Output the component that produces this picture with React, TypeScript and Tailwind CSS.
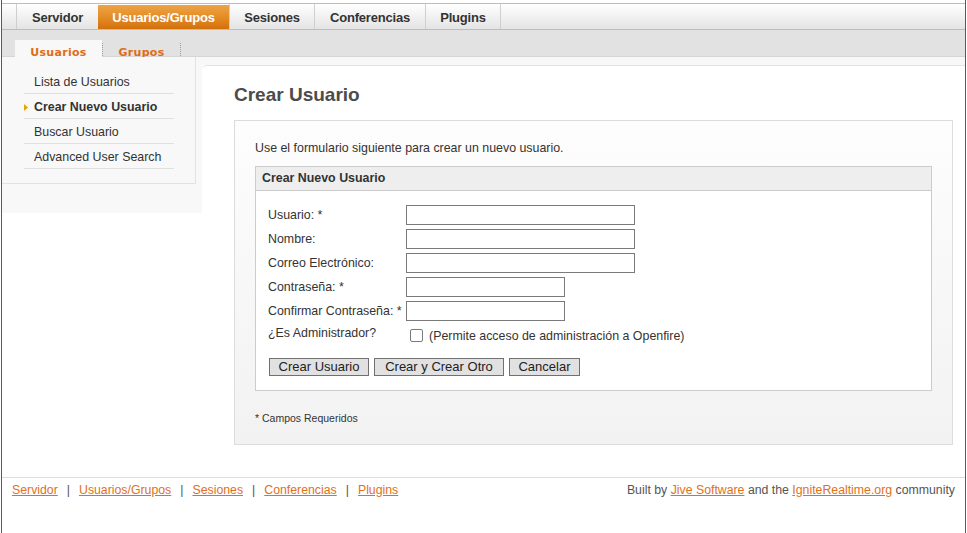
import type React from 'react';

const topTabs = [
  { label: 'Servidor', className: 'w-[82px]' },
  { label: 'Usuarios/Grupos', className: 'w-[131px]', active: true },
  { label: 'Sesiones', className: 'w-[85px]' },
  { label: 'Conferencias', className: 'w-[111px]' },
  { label: 'Plugins', className: 'w-[76px] border-r' },
];

const sideItems = [
  { label: 'Lista de Usuarios' },
  { label: 'Crear Nuevo Usuario', active: true },
  { label: 'Buscar Usuario' },
  { label: 'Advanced User Search' },
];

const fields = [
  { label: 'Usuario: *', width: 'w-[229px]' },
  { label: 'Nombre:', width: 'w-[229px]' },
  { label: 'Correo Electrónico:', width: 'w-[229px]' },
  { label: 'Contraseña: *', width: 'w-[159px]' },
  { label: 'Confirmar Contraseña: *', width: 'w-[159px]' },
];

const footerLinks = ['Servidor', 'Usuarios/Grupos', 'Sesiones', 'Conferencias', 'Plugins'];

const TopNav: React.FC = () => (
  <div className="mt-[3px] flex h-[27px] border-y border-[#bdbdbd] bg-gradient-to-b from-white to-[#e4e4e4] pl-[14px]">
    {topTabs.map((tab) =>
      tab.active ? (
        <div
          key={tab.label}
          className={`${tab.className} mt-[1px] flex items-center justify-center bg-gradient-to-b from-[#eda445] via-[#e48d25] to-[#d3700a] pt-[1px] text-[13px] font-bold tracking-[-0.2px] text-white`}
        >
          {tab.label}
        </div>
      ) : (
        <div
          key={tab.label}
          className={`${tab.className} flex items-center justify-center border-l border-[#cfcfcf] pt-[2px] text-[13px] font-bold tracking-[-0.2px] text-[#333]`}
        >
          {tab.label}
        </div>
      )
    )}
  </div>
);

const SubNav: React.FC = () => (
  <div className="flex h-[27px] items-end border-b border-[#d5d5d5] bg-[#e2e2e2] pl-[13px] font-['DejaVu_Sans',Verdana,sans-serif] text-[11px] leading-[13px] font-bold text-[#df6d17]">
    <div className="-mb-px flex h-[17px] w-[87px] items-center justify-center bg-[#f8f8f8] pt-[8px] tracking-[0.3px]">
      Usuarios
    </div>
    <div className="h-[13px] border-l border-dotted border-[#8da2a8]" />
    <div className="-mb-px flex h-[17px] w-[77px] items-center justify-center pt-[8px] tracking-[0.3px]">Grupos</div>
    <div className="h-[13px] border-l border-dotted border-[#8da2a8]" />
  </div>
);

const Sidebar: React.FC = () => (
  <aside className="w-[200px] shrink-0 self-start">
    <div className="h-[156px] bg-[#f8f8f8]">
      <div className="h-[127px] w-[194px] border-r border-b border-[#e2e2e2] pt-[12px] pl-[22px]">
        <ul className="w-[150px]">
          {sideItems.map((item) => (
            <li
              key={item.label}
              className={`flex h-[25px] items-center border-b border-[#e0e0e0] pt-[2px] text-[12.4px] text-[#333] ${item.active ? 'font-bold' : ''}`}
            >
              <span className="flex w-[10px] items-center">
                {item.active && (
                  <svg width="4" height="7" viewBox="0 0 4 7">
                    <path d="M0 0L4 3.5L0 7z" fill="#e9a10c" />
                  </svg>
                )}
              </span>
              {item.label}
            </li>
          ))}
        </ul>
      </div>
    </div>
  </aside>
);

const UserForm: React.FC = () => (
  <div className="mt-[10px] border border-[#cccccc] bg-white">
    <div className="flex h-[24px] items-center border-b border-[#cccccc] bg-[#eeeeee] pl-[6px] text-[12.4px] font-bold text-[#333]">
      Crear Nuevo Usuario
    </div>
    <div className="pt-[14px] pb-[14px] pl-[12px] text-[12.4px] text-[#333]">
      <div className="flex flex-col gap-[4px]">
        {fields.map((f) => (
          <div key={f.label} className="flex h-[20px] items-center">
            <label className="w-[138px] shrink-0">{f.label}</label>
            <input type="text" className={`${f.width} h-[20px] border border-[#7a7a7a] bg-white`} />
          </div>
        ))}
        <div className="flex h-[20px] items-center">
          <label className="w-[138px] shrink-0 -mt-[3px]">¿Es Administrador?</label>
          <span className="ml-[4px] h-[13px] w-[13px] rounded-[2px] border border-[#7a7a7a] bg-white" />
          <span className="ml-[6px] pt-[2px]">(Permite acceso de administración a Openfire)</span>
        </div>
      </div>
      <div className="mt-[13px] ml-[1px] flex gap-[5px] text-[13px] text-[#222]">
        <button className="flex h-[18px] w-[100px] items-center justify-center border border-[#707070] bg-[#e1e1e1]">
          Crear Usuario
        </button>
        <button className="flex h-[18px] w-[130px] items-center justify-center border border-[#707070] bg-[#e1e1e1]">
          Crear y Crear Otro
        </button>
        <button className="flex h-[18px] w-[71px] items-center justify-center border border-[#707070] bg-[#e1e1e1]">
          Cancelar
        </button>
      </div>
    </div>
  </div>
);

const Footer: React.FC = () => (
  <footer className="mt-[32px] flex justify-between border-t border-[#dddddd] pt-[5px] pr-[10px] pl-[10px] text-[12.3px] leading-[15px]">
    <div className="flex text-[#555]">
      {footerLinks.map((link, i) => (
        <span key={link} className="flex">
          {i > 0 && <span className="mx-[9px]">|</span>}
          <a href="#" className="text-[#e0701c] underline">
            {link}
          </a>
        </span>
      ))}
    </div>
    <div className="text-[#555]">
      Built by{' '}
      <a href="#" className="text-[#e0701c] underline">
        Jive Software
      </a>{' '}
      and the{' '}
      <a href="#" className="text-[#e0701c] underline">
        IgniteRealtime.org
      </a>{' '}
      community
    </div>
  </footer>
);

export default function App() {
  return (
    <div className="h-[533px] w-[967px] overflow-hidden bg-white font-['Liberation_Sans',Arial,sans-serif]">
      <div className="ml-[1px] flex h-full w-[965px] flex-col border-x border-[#595959]">
        <TopNav />
        <SubNav />
        <div className="flex">
          <Sidebar />
          <main className="flex-1">
            <div className="h-[8px] bg-[#f8f8f8]" />
            <div className="rounded-tl-[5px] border-t border-[#e3e3e3] pt-[18px] pr-[12px] pl-[32px]">
              <h1 className="text-[19px] leading-[22px] font-bold text-[#4c4c4c]">Crear Usuario</h1>
              <div className="mt-[14px] border border-[#dcdcdc] bg-gradient-to-b from-[#fdfdfd] to-[#f2f2f2] px-[20px] pt-[19px] pb-[19px]">
                <p className="text-[12.4px] leading-[16px] text-[#333]">
                  Use el formulario siguiente para crear un nuevo usuario.
                </p>
                <UserForm />
                <p className="mt-[20px] text-[10.5px] leading-[14px] text-[#333]">* Campos Requeridos</p>
              </div>
            </div>
          </main>
        </div>
        <Footer />
      </div>
    </div>
  );
}
